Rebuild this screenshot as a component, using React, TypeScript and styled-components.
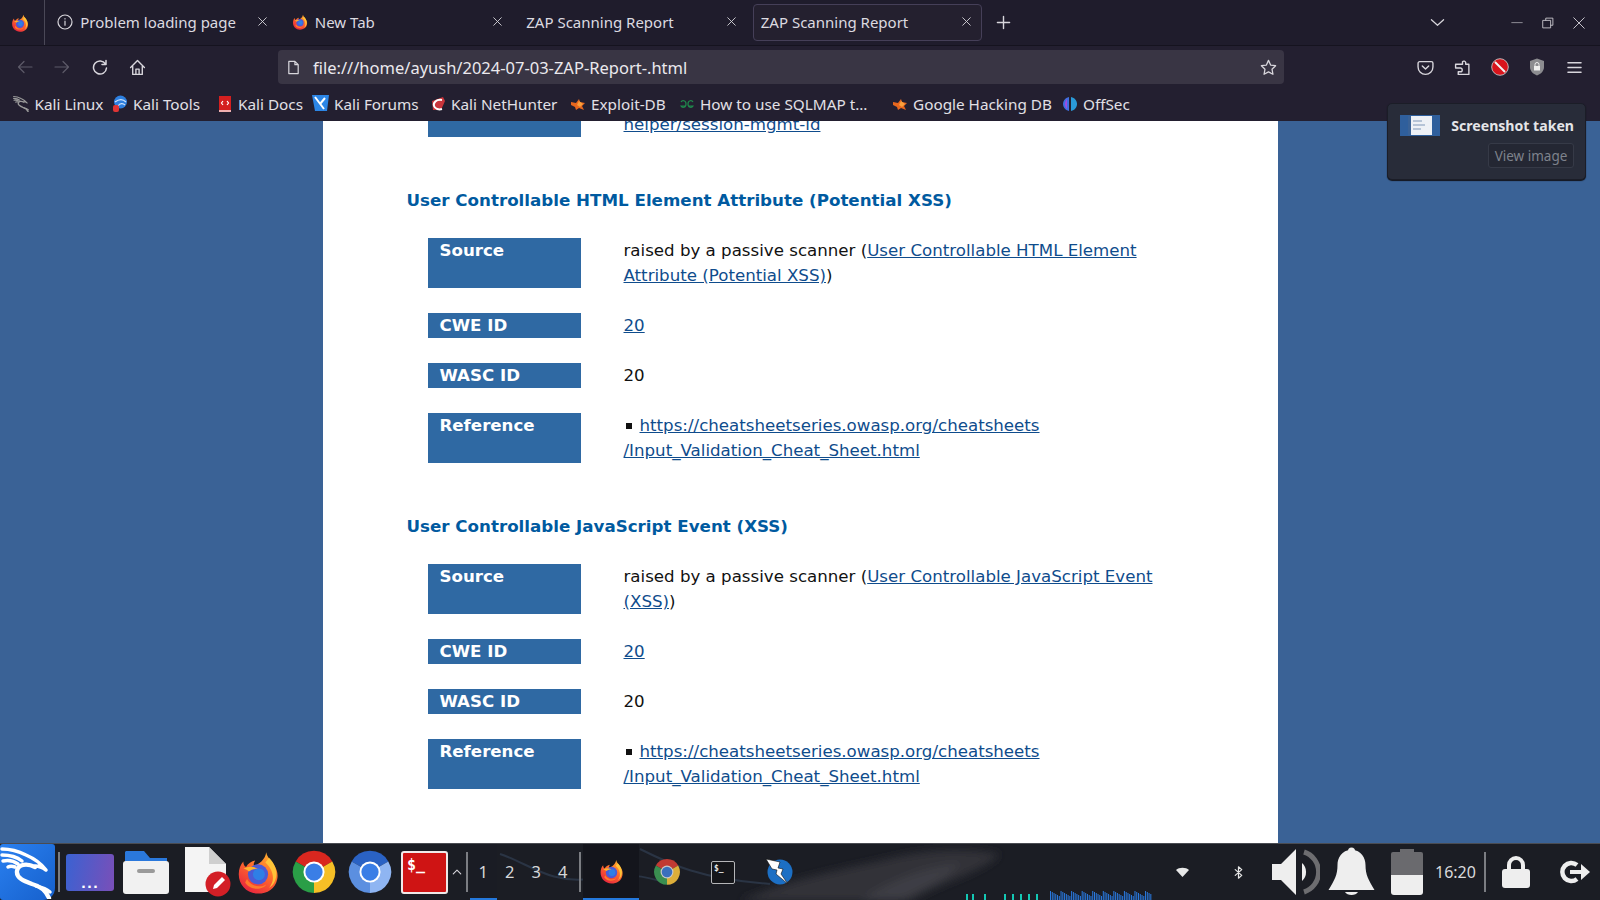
import React from "react";
import styled, { createGlobalStyle } from "styled-components";

const Global = createGlobalStyle`
  html, body { margin: 0; padding: 0; height: 100%; overflow: hidden; background: #1e1c2b; }
  * { box-sizing: border-box; }
`;

const Frame = styled.div`
  width: 1600px; height: 900px; position: relative; overflow: hidden;
  display: flex; flex-direction: column;
  font-family: "Noto Sans", "Open Sans", sans-serif; color: #e6e4ea;
`;

/* ---------- tab strip ---------- */
const TabBar = styled.div`
  height: 46px; flex: none; display: flex; align-items: stretch;
  background: #1f1c2c; border-bottom: 1px solid #15131f;
`;
const LogoCell = styled.div`
  width: 45px; margin-right: 1.5px; display: flex; align-items: center; justify-content: center;
  border-right: 1px solid #4a4857; padding-right: 4px;
`;
const Tab = styled.div<{ $active?: boolean }>`
  flex: 0 0 229px; margin: 4px 2.75px; padding: 0 9px 2px 7px; border-radius: 4px;
  display: flex; align-items: center; gap: 7px; font-size: 15px; color: #dcdae0; white-space: nowrap;
  border: 1px solid ${p => (p.$active ? "#453f58" : "transparent")};
  background: ${p => (p.$active ? "#24202f" : "transparent")};
`;
const TabTitle = styled.span`flex: 1; overflow: hidden;`;
const PlusBtn = styled.div`
  width: 38px; display: flex; align-items: center; justify-content: center;
`;
const Grow = styled.div`flex: 1;`;
const Gap = styled.div<{ $w: number }>`flex: 0 0 ${p => p.$w}px;`;
const WinBtn = styled.div<{ $w: number }>`
  width: ${p => p.$w}px; display: flex; align-items: center; justify-content: center;
`;

/* ---------- nav ---------- */
const NavBar = styled.div`
  height: 39px; flex: none; display: flex; align-items: center; background: #231f30; padding: 3px 0 0 6px;
`;
const NavBtn = styled.div<{ $w?: number }>`
  width: ${p => p.$w ?? 37}px; display: flex; align-items: center; justify-content: center; flex: none;
`;
const UrlBar = styled.div`
  width: 1006px; height: 34px; margin-left: 123px; margin-right: 122px; flex: none; border-radius: 4px;
  background: #393544; display: flex; align-items: center; padding: 0 7px 0 8px; gap: 12px;
`;
const UrlText = styled.span`flex: 1; font-size: 16.5px; color: #ebe9ee;`;

/* ---------- bookmarks ---------- */
const BookmarkBar = styled.div`
  height: 36px; flex: none; display: flex; align-items: center; background: #231f30;
  padding: 1px 0 0 12.5px; font-size: 15.3px; color: #e2e0e6;
`;
const Bookmark = styled.div<{ $w: number }>`
  flex: 0 0 ${p => p.$w}px; display: flex; align-items: center; gap: 5px; white-space: nowrap;
`;
const BookmarkIcon = styled.span`
  flex: 0 0 16px; height: 18px; display: flex; align-items: center; justify-content: center;
`;

/* ---------- page ---------- */
const Viewport = styled.div`
  flex: 1; min-height: 0; background: #3a6296; display: flex; justify-content: center; overflow: hidden;
`;
const Doc = styled.div`
  width: 955px; background: #fff; height: 100%; overflow: hidden; padding-left: 84px;
  font-family: "DejaVu Sans", sans-serif; font-size: 16.65px; line-height: 25px; color: #111;
`;
const Scroller = styled.div`margin-top: -34px;`;
const Alert = styled.section`margin-bottom: 51px;`;
const AlertTitle = styled.h3`
  margin: 0 0 25px; font-size: 16.7px; line-height: 25px; font-weight: 700; color: #005aa0;
`;
const Rows = styled.div`
  display: grid; grid-template-columns: 153px 1fr; column-gap: 43px; row-gap: 25px; margin-left: 21px;
`;
const Label = styled.div`
  background: #2f69a3; color: #fff; font-weight: 700; padding-left: 12px;
`;
const Value = styled.div`white-space: nowrap;`;
const A = styled.a`color: #0f4c8c; text-decoration: underline;`;
const Square = styled.i`
  display: inline-block; width: 6px; height: 6px; background: #111; margin: 0 8px 2px 2px; vertical-align: middle;
`;

/* ---------- toast ---------- */
const Toast = styled.div`
  position: absolute; left: 1387px; top: 103px; width: 199px; height: 77px; border-radius: 5px;
  background: #282c39; border: 1px solid #1b1d27; box-shadow: 0 1px 1px #12131a;
  padding: 11px 11px 0 12px;
`;
const ToastHead = styled.div`
  display: flex; align-items: center; justify-content: space-between;
  font-weight: 700; font-size: 14.1px; color: #e4e5e8; white-space: nowrap;
`;
const ToastFoot = styled.div`display: flex; justify-content: flex-end; margin-top: 7px;`;
const ToastBtn = styled.div`
  width: 86px; height: 25px; border: 1px solid #363a47; background: #242733; border-radius: 3px;
  font-size: 13.5px; color: #7e828c; display: flex; align-items: center; justify-content: center;
`;

/* ---------- taskbar ---------- */
const Taskbar = styled.div`
  position: relative; height: 57px; flex: none; display: flex; align-items: center; overflow: hidden;
  background: #1b1d24; border-top: 1px solid #4a4c52;
`;
const Wall = styled.svg`position: absolute; left: 0; top: 0; width: 1600px; height: 57px;`;
const Slot = styled.div<{ $w: number; $ml?: number }>`
  position: relative; flex: none; width: ${p => p.$w}px; margin-left: ${p => p.$ml ?? 0}px;
  display: flex; align-items: center; justify-content: center;
`;
const KaliCell = styled.div`
  position: relative; flex: none; width: 55px; height: 56px; border-radius: 3px 3px 12px 3px;
  background: linear-gradient(135deg, #2a80f0, #1660cc);
`;
const Sep = styled.div<{ $ml: number }>`
  position: relative; flex: none; width: 2px; height: 40px; background: #7b7d82; margin-left: ${p => p.$ml}px;
`;
const PagerWrap = styled.div`position: relative; flex: none; display: flex; margin-left: 2px;`;
const Pager = styled.div<{ $on?: boolean }>`
  flex: none; width: 26.5px; height: 56px; display: flex; align-items: center; justify-content: center;
  font-size: 16.5px; color: #d6d7d9; background: ${p => (p.$on ? "#1a1c24" : "transparent")};
  border-bottom: 2px solid ${p => (p.$on ? "#2478dc" : "transparent")};
`;
const ActiveTask = styled.div`
  position: relative; flex: none; width: 56px; height: 56px; margin-left: 2px; display: flex; align-items: center; justify-content: center;
  background: #14151c; border-bottom: 2px solid #2478dc;
`;
const Task = styled.div`
  position: relative; flex: none; width: 56px; height: 56px; display: flex; align-items: center; justify-content: center;
`;
const Clock = styled.div`
  position: relative; flex: none; margin-left: 12px; font-size: 16px; color: #d9dadc; width: 39px; white-space: nowrap;
`;
const FolderBox = styled.div`
  width: 48px; height: 37px; border-radius: 3px; display: flex; align-items: flex-end; justify-content: center;
  background: linear-gradient(100deg, #3a62d2, #7a4fb8); color: #fff; font-size: 13px; font-weight: 700; line-height: 15px; letter-spacing: 1px;
  font-family: "DejaVu Sans", sans-serif;
`;
const RedTerm = styled.div`
  width: 47px; height: 43px; background: #cf1414; border: 2px solid #f0e9e9; border-radius: 3px; color: #fff;
  font: 700 15px/18px "DejaVu Sans Mono", monospace; padding: 3px 0 0 4px;
`;
const MiniTerm = styled.div`
  width: 24px; height: 23px; background: #15161a; border: 1.5px solid #b5b6b8; border-radius: 2px; color: #e8e8e8;
  font: 700 8px/10px "DejaVu Sans Mono", monospace; padding: 2px 0 0 2px;
`;

/* ---------- icons ---------- */
const Firefox = ({ s = 16 }: { s?: number }) => {
  const id = `ff${s}`;
  return (
    <svg width={s} height={s} viewBox="0 0 48 48">
      <defs>
        <linearGradient id={id} x1="0.8" y1="0" x2="0.2" y2="1">
          <stop offset="0" stopColor="#ffb32e" />
          <stop offset="0.45" stopColor="#ff6a2c" />
          <stop offset="1" stopColor="#e5203f" />
        </linearGradient>
      </defs>
      <path d="M33 2c1 6 5 8 8 13 4 6 5 11 4 16-2 11-11 16-21 16C12 47 3 38 3 26 3 20 5 15 8 12c0 3 1 5 3 6 2-4 6-6 10-7-2 3-2 5-1 6 5-2 12-7 13-15z" fill={`url(#${id})`} />
      <path d="M36 8c5 5 8 11 8 18 0 6-3 12-8 15 3-4 5-8 4-14-1-7-5-11-8-14z" fill="#ffca3a" opacity=".9" />
      <circle cx="24" cy="26" r="11" fill="#4b5bd6" />
      <circle cx="25" cy="26" r="6.5" fill="#2f7fe6" />
      <path d="M8 20c5-3 11-3 16 0-5 0-8 1-10 3-2-2-4-3-6-3z" fill="#ffb32e" />
      <path d="M12 31c4 8 14 10 21 6-2 5-17 8-23-2z" fill="#ff7a2c" />
    </svg>
  );
};

const Chrome = ({ s, mono, dim }: { s: number; mono?: boolean; dim?: boolean }) => {
  const c = mono ? ["#2a62c4", "#5b8fe0", "#8fb5f2"] : dim ? ["#c23a33", "#dcae3a", "#3a8e50"] : ["#d9271f", "#f6bf26", "#2a9e47"];
  return (
    <svg width={s} height={s} viewBox="0 0 48 48">
      <path d="M24 24L4.9 13A22 22 0 0 1 43.1 13Z" fill={c[0]} />
      <path d="M24 24L43.1 13A22 22 0 0 1 24 46Z" fill={mono ? c[2] : c[1]} />
      <path d="M24 24L24 46A22 22 0 0 1 4.9 13Z" fill={mono ? c[1] : c[2]} />
      <circle cx="24" cy="24" r="11" fill={dim ? "#c8c8c8" : "#fff"} />
      <circle cx="24" cy="24" r="9" fill={dim ? "#3a6fbe" : "#3a7ee6"} />
    </svg>
  );
};

const Dragon = ({ s, c = "#fff", w = 3 }: { s: number; c?: string; w?: number }) => (
  <svg width={s} height={s} viewBox="0 0 55 55" fill="none" stroke={c} strokeWidth={w} strokeLinecap="round" strokeLinejoin="round">
    <path d="M2 5c10 0 18 3 24 6 7 3 14 7 20 15-4-3-8-4-11-4" />
    <path d="M2 11c8 0 15 2 20 6M3 17c5-1 11 0 15 3M8 23c2-1 4-1 7 0" />
    <path d="M35 23c-8-4-17-3-18 4-1 7 7 10 15 13 8 2 14 7 17 14" strokeWidth={w + 0.8} />
    <path d="M36 42c4 1 9 2 14 6" />
  </svg>
);

const Line = ({ w, h, children, sw = 1.6, c = "#d8d6dc" }: { w: number; h?: number; children: React.ReactNode; sw?: number; c?: string }) => (
  <svg width={w} height={h ?? w} viewBox="0 0 16 16" fill="none" stroke={c} strokeWidth={sw} strokeLinecap="round" strokeLinejoin="round">
    {children}
  </svg>
);

const Close = () => (
  <Line w={11} sw={1.3}><path d="M2.5 2.5l11 11M13.5 2.5l-11 11" /></Line>
);

const Bug = () => (
  <svg width="16" height="16" viewBox="0 0 16 16">
    <path d="M1 6l5 1 3-4 1 3 5 1-3 3 2 4-5-2-3 2-1-3-4-2z" fill="#e8671e" />
    <path d="M9 5l4 3-3 3-3-2z" fill="#f9a03c" />
  </svg>
);

const bookmarks: { icon: React.ReactNode; text: string; w: number }[] = [
  { icon: <Dragon s={17} c="#9a9a9a" w={3.5} />, text: "Kali Linux", w: 99.5 },
  {
    icon: (
      <svg width="16" height="18" viewBox="0 0 16 18">
        <circle cx="8.5" cy="7" r="6.5" fill="#2d7fe0" />
        <path d="M3 7c4-3 8-3 11 0M6 11c2-3 5-3 7-1" stroke="#cfe3fb" strokeWidth="1.2" fill="none" />
        <rect x="1" y="10" width="6" height="7" rx="2" fill="#e03434" />
      </svg>
    ),
    text: "Kali Tools",
    w: 105,
  },
  {
    icon: (
      <svg width="14" height="18" viewBox="0 0 14 18">
        <rect x="1" y="1" width="12" height="14" fill="#d41f1f" />
        <rect x="1" y="15" width="12" height="2" fill="#f0b0b0" />
        <path d="M5 6L3.5 8 5 10M9 6l1.5 2L9 10" stroke="#fff" strokeWidth="1.2" fill="none" />
      </svg>
    ),
    text: "Kali Docs",
    w: 95,
  },
  {
    icon: (
      <svg width="17" height="17" viewBox="0 0 17 17">
        <path d="M0 0h17l-2 16H3z" fill="#2c86e6" />
        <path d="M3 2l9 12M13 3L8 9" stroke="#fff" strokeWidth="2" />
      </svg>
    ),
    text: "Kali Forums",
    w: 118,
  },
  {
    icon: (
      <svg width="16" height="16" viewBox="0 0 16 16">
        <path d="M2 5l11-4 2 4-4 9H3z" fill="#c9353b" />
        <path d="M12 4C6 3 3 7 4 10c1 3 5 4 8 3" stroke="#fff" strokeWidth="2" fill="none" />
      </svg>
    ),
    text: "Kali NetHunter",
    w: 140,
  },
  { icon: <Bug />, text: "Exploit-DB", w: 109 },
  {
    icon: (
      <svg width="16" height="10" viewBox="0 0 16 10" fill="none" stroke="#1f8a4c" strokeWidth="1.2">
        <path d="M2 3c1-2 5-2 5 2s-4 4-5 2h5M14 3c-1-2-5-2-5 2s4 4 5 2H9" />
      </svg>
    ),
    text: "How to use SQLMAP t…",
    w: 213,
  },
  { icon: <Bug />, text: "Google Hacking DB", w: 170 },
  {
    icon: (
      <svg width="16" height="16" viewBox="0 0 16 16">
        <path d="M7 1C3 2 1 5 1 8s2 6 6 7z" fill="#3f6fe0" />
        <path d="M9 1c4 1 6 4 6 7s-2 6-6 7z" fill="#2a9ad8" />
        <path d="M3 8c0-2 1-4 2-5v10C4 12 3 10 3 8z" fill="#a04be0" />
      </svg>
    ),
    text: "OffSec",
    w: 70,
  },
];

type Row = { label: string; value: React.ReactNode };
const RowsOf = (rows: Row[]) =>
  rows.map(r => (
    <React.Fragment key={r.label}>
      <Label>{r.label}</Label>
      <Value>{r.value}</Value>
    </React.Fragment>
  ));

const refLink = (
  <>
    <Square />
    <A href="#">
      https://cheatsheetseries.owasp.org/cheatsheets
      <br />
      /Input_Validation_Cheat_Sheet.html
    </A>
  </>
);

const alert = (source: React.ReactNode): Row[] => [
  { label: "Source", value: source },
  { label: "CWE ID", value: <A href="#">20</A> },
  { label: "WASC ID", value: "20" },
  { label: "Reference", value: refLink },
];

export default function App() {
  return (
    <Frame>
      <Global />
      <TabBar>
        <LogoCell><Firefox s={18} /></LogoCell>
        <Tab>
          <Line w={16} sw={1.2}><circle cx="8" cy="8" r="7" /><path d="M8 7.2v4M8 4.6v.3" /></Line>
          <TabTitle>Problem loading page</TabTitle>
          <Close />
        </Tab>
        <Tab>
          <Firefox s={16} />
          <TabTitle>New Tab</TabTitle>
          <Close />
        </Tab>
        <Tab>
          <TabTitle>ZAP Scanning Report</TabTitle>
          <Close />
        </Tab>
        <Tab $active>
          <TabTitle>ZAP Scanning Report</TabTitle>
          <Close />
        </Tab>
        <PlusBtn><Line w={15} sw={1.5}><path d="M8 1.5v13M1.5 8h13" /></Line></PlusBtn>
        <Grow />
        <WinBtn $w={40}><Line w={15} sw={1.3}><path d="M1.5 5L8 11l6.500-6" /></Line></WinBtn>
        <Gap $w={44} />
        <WinBtn $w={31}><Line w={12} sw={1.2} c="#9b99a2"><path d="M1 7.500h14" /></Line></WinBtn>
        <WinBtn $w={31}><Line w={12} sw={1.1}><path d="M5 4V1.500h9.500V11H12M1.500 4.500H11.500V14.500H1.500z" /></Line></WinBtn>
        <WinBtn $w={31}><Line w={12} sw={1.2}><path d="M1 1l14 14M15 1L1 15" /></Line></WinBtn>
        <Gap $w={6} />
      </TabBar>

      <NavBar>
        <NavBtn $w={37}><Line w={16} sw={1.2} c="#5d5a68"><path d="M15 8H1.500M7 2.500L1.500 8 7 13.500" /></Line></NavBtn>
        <NavBtn $w={38}><Line w={16} sw={1.2} c="#5d5a68"><path d="M1 8h13.500M9 2.500L14.500 8 9 13.500" /></Line></NavBtn>
        <NavBtn $w={38}><Line w={16} sw={1.5}><path d="M13.500 5A6.500 6.500 0 1 0 14.500 9M14 1.500V5.500H10" /></Line></NavBtn>
        <NavBtn $w={36}><Line w={17} sw={1.3}><path d="M1.500 8L8 1.500 14.500 8M3.500 7v7.500h9V7M6.500 14.500v-5h3v5" /></Line></NavBtn>
        <UrlBar>
          <Line w={15} sw={1.3}><path d="M3 1.500h6.500l3.500 3.500v9.500H3zM9.500 1.500V5H13" /></Line>
          <UrlText>file:///home/ayush/2024-07-03-ZAP-Report-.html</UrlText>
          <Line w={17} sw={1.2}><path d="M8 1.300l2 4.400 4.700.6-3.400 3.300.9 4.800L8 12.100l-4.200 2.300.9-4.800L1.300 6.300 6 5.700z" /></Line>
        </UrlBar>
        <NavBtn $w={38}><Line w={17} sw={1.3}><path d="M2.500 2.500h11a1.500 1.500 0 0 1 1.500 1.500v3.500a7 7 0 0 1-14 0V4a1.500 1.500 0 0 1 1.500-1.500zM5 6.500l3 3 3-3" /></Line></NavBtn>
        <NavBtn $w={37}><Line w={17} sw={1.3}><path d="M8 2.500a1.800 1.800 0 0 1 3 .8V5h3v9.500H4V12h2a1.700 1.700 0 0 0 0-3.500H1.500V5H8z" /></Line></NavBtn>
        <NavBtn $w={37}>
          <svg width="18" height="18" viewBox="0 0 18 18"><circle cx="9" cy="9" r="8.300" fill="#d8141c" stroke="#d6d6d6" strokeWidth="0.8" /><path d="M4 4l10 10" stroke="#f3f3f3" strokeWidth="2" /></svg>
        </NavBtn>
        <NavBtn $w={37}>
          <svg width="16" height="18" viewBox="0 0 16 18"><path d="M8 .5l7 2.500v6c0 4-3 7-7 8.500-4-1.500-7-4.500-7-8.500V3z" fill="#8c8c90" /><rect x="5" y="8" width="6" height="4.500" fill="#eee" /><path d="M6 8V6.500a2 2 0 0 1 4 0V8" stroke="#eee" fill="none" /></svg>
        </NavBtn>
        <NavBtn $w={38}><Line w={15} sw={1.5}><path d="M1 3h14M1 8h14M1 13h14" /></Line></NavBtn>
      </NavBar>

      <BookmarkBar>
        {bookmarks.map(b => (
          <Bookmark key={b.text} $w={b.w}><BookmarkIcon>{b.icon}</BookmarkIcon><span>{b.text}</span></Bookmark>
        ))}
      </BookmarkBar>

      <Viewport>
        <Doc>
          <Scroller>
            <Alert>
              <Rows>
                <Label>&nbsp;<br />&nbsp;</Label>
                <Value><br /><A href="#">helper/session-mgmt-id</A></Value>
              </Rows>
            </Alert>
            <Alert>
              <AlertTitle>User Controllable HTML Element Attribute (Potential XSS)</AlertTitle>
              <Rows>
                {RowsOf(alert(<>raised by a passive scanner (<A href="#">User Controllable HTML Element<br />Attribute (Potential XSS)</A>)</>))}
              </Rows>
            </Alert>
            <Alert>
              <AlertTitle>User Controllable JavaScript Event (XSS)</AlertTitle>
              <Rows>
                {RowsOf(alert(<>raised by a passive scanner (<A href="#">User Controllable JavaScript Event<br />(XSS)</A>)</>))}
              </Rows>
            </Alert>
          </Scroller>
        </Doc>
      </Viewport>

      <Taskbar>
        <Wall viewBox="0 0 1600 57">
          <defs>
            <filter id="soft" x="-10%" y="-50%" width="120%" height="200%"><feGaussianBlur stdDeviation="4" /></filter>
          </defs>
          <g filter="url(#soft)">
            <path d="M740 57C790 34 850 24 900 12c40-8 70-8 100-2-20 20-60 28-90 47z" fill="#313238" />
            <path d="M860 57c30-20 60-33 100-38-10 15-40 28-60 38z" fill="#3d3e44" />
          </g>
          <path d="M500 10c30 10 50 30 90 25s50-5 80 5M640 5c30 15 60 30 130 35" stroke="#2a3444" strokeWidth="2" fill="none" />
          <g fill="#14c8b4">
            {[966, 972, 984, 1004, 1012, 1020, 1028, 1036].map(x => <rect key={x} x={x} y={50} width="2" height="7" />)}
          </g>
          <g fill="#2a7ae0">
            {Array.from({ length: 58 }, (_, i) => (
              <rect key={i} x={1050 + i * 1.760} y={47 + ((i * 7) % 6)} width="1" height="10" />
            ))}
          </g>
        </Wall>
        <KaliCell><Dragon s={55} w={3.5} /></KaliCell>
        <Sep $ml={3} />
        <Slot $w={48} $ml={6}><FolderBox>...</FolderBox></Slot>
        <Slot $w={48} $ml={8}>
          <svg width="48" height="46" viewBox="0 0 48 46">
            <path d="M4 2h18l6 7h17v12H3V3z" fill="#2a78dc" />
            <rect x="1" y="12" width="46" height="33" rx="3" fill="#f1f1f1" />
            <rect x="15" y="20" width="18" height="4" rx="2" fill="#9a9a9a" />
          </svg>
        </Slot>
        <Slot $w={48} $ml={14}>
          <svg width="48" height="50" viewBox="0 0 48 50">
            <path d="M1 0h24l17 17v28H1z" fill="#f4f4f4" />
            <path d="M25 0l17 17H25z" fill="#cfcfcf" />
            <circle cx="34" cy="37" r="12.500" fill="#d31f26" />
            <path d="M29 42l1-4 8-8 3 3-8 8z" fill="#fff" />
          </svg>
        </Slot>
        <Slot $w={44} $ml={4}><Firefox s={49} /></Slot>
        <Slot $w={46} $ml={11}><Chrome s={50} /></Slot>
        <Slot $w={46} $ml={10}><Chrome s={50} mono /></Slot>
        <Slot $w={47} $ml={8}><RedTerm>$_</RedTerm></Slot>
        <Slot $w={10} $ml={4}><Line w={10} sw={1.8}><path d="M2 11l6-6 6 6" /></Line></Slot>
        <Sep $ml={4} />
        <PagerWrap>
          <Pager $on>1</Pager>
          <Pager>2</Pager>
          <Pager>3</Pager>
          <Pager>4</Pager>
        </PagerWrap>
        <Sep $ml={3} />
        <ActiveTask><Firefox s={25} /></ActiveTask>
        <Task><Chrome s={28} dim /></Task>
        <Task><MiniTerm>$_</MiniTerm></Task>
        <Task>
          <svg width="28" height="28" viewBox="0 0 28 28">
            <circle cx="15" cy="14" r="12.500" fill="#1c6fc4" />
            <path d="M1 1l14 3-2 6 5 1-2 5 7 10-12-10 1-4-5-1z" fill="#fff" stroke="#111" strokeWidth=".6" />
          </svg>
        </Task>
        <Slot $w={56} $ml={347}>
          <svg width="13" height="10" viewBox="0 0 13 10"><path d="M0 3c3-3 10-3 13 0L6.500 10z" fill="#e8e8e8" /></svg>
        </Slot>
        <Slot $w={56}>
          <Line w={13} sw={1.5} c="#e6e6e6"><path d="M4 4.500l8 7L8 15V1l4 3.500-8 7" /></Line>
        </Slot>
        <Slot $w={48} $ml={6}>
          <svg width="48" height="46" viewBox="0 0 48 46">
            <path d="M0 15h9L24 0v46L9 31H0z" fill="#eeeeee" />
            <path d="M30 14a12 12 0 0 1 0 18z" fill="#eeeeee" />
            <path d="M32 3a21 21 0 0 1 0 40" stroke="#6d6d70" strokeWidth="5" fill="none" />
          </svg>
        </Slot>
        <Slot $w={47} $ml={8}>
          <svg width="47" height="50" viewBox="0 0 47 50">
            <circle cx="23.500" cy="4" r="3.500" fill="#eee" />
            <path d="M23.500 3c10 0 14 8 14 15 0 10 3 15 9 25H.500c6-10 9-15 9-25 0-7 4-15 14-15z" fill="#eee" />
            <path d="M17 45h13c-2 4-11 4-13 0z" fill="#eee" />
          </svg>
        </Slot>
        <Slot $w={32} $ml={16}>
          <svg width="32" height="46" viewBox="0 0 32 46">
            <rect x="9" y="0" width="14" height="4" fill="#6a6a6e" />
            <path d="M0 5a2 2 0 0 1 2-2h28a2 2 0 0 1 2 2v21H0z" fill="#6a6a6e" />
            <path d="M0 26h32v17a3 3 0 0 1-3 3H3a3 3 0 0 1-3-3z" fill="#eee" />
          </svg>
        </Slot>
        <Clock>16:20</Clock>
        <Sep $ml={10} />
        <Slot $w={28} $ml={16}>
          <svg width="28" height="32" viewBox="0 0 28 32">
            <path d="M7 14V9a7 7 0 0 1 14 0v5" stroke="#eee" strokeWidth="4" fill="none" />
            <rect x="0" y="13" width="28" height="19" rx="3" fill="#eee" />
          </svg>
        </Slot>
        <Slot $w={32} $ml={28}>
          <svg width="32" height="24" viewBox="0 0 32 24">
            <path d="M19 5a9 9 0 1 0 0 14" stroke="#eee" strokeWidth="4.500" fill="none" />
            <path d="M12 10h11V4l9 8-9 8v-6H12z" fill="#eee" />
          </svg>
        </Slot>
      </Taskbar>

      <Toast>
        <ToastHead>
          <svg width="40" height="21" viewBox="0 0 40 21">
            <rect width="40" height="21" fill="#2f5f9c" />
            <rect x="8" y="1" width="24" height="19" fill="#eef1f6" />
            <rect x="8" y="1" width="3" height="19" fill="#3a6296" />
            <path d="M13 6h9M13 10h12M13 14h8" stroke="#7e97b8" />
          </svg>
          <span>Screenshot taken</span>
        </ToastHead>
        <ToastFoot><ToastBtn>View image</ToastBtn></ToastFoot>
      </Toast>
    </Frame>
  );
}
